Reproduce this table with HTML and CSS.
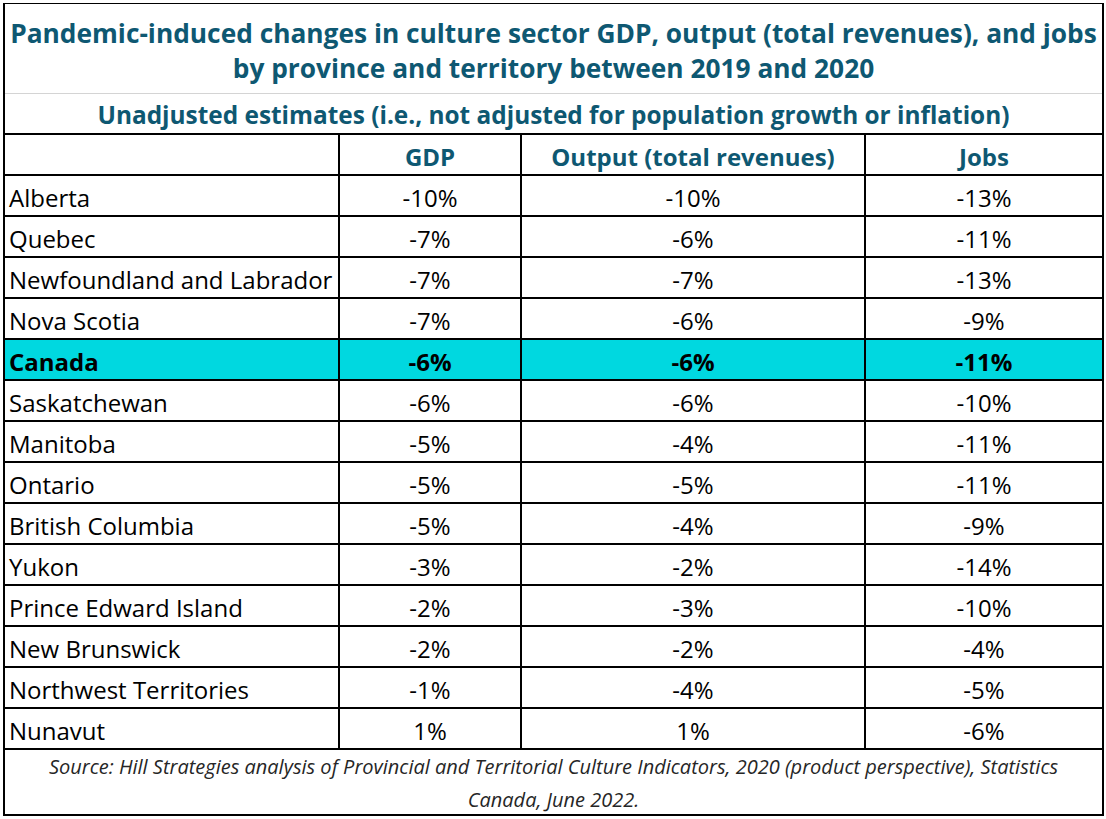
FILE: index.html
```html
<!DOCTYPE html>
<html>
<head>
<meta charset="utf-8">
<link rel="stylesheet" href="styles.css">
</head>
<body>
<div class="sheet">
  <div class="title">Pandemic-induced changes in culture sector GDP, output (total revenues), and jobs<br>by province and territory between 2019 and 2020</div>
  <div class="subtitle">Unadjusted estimates (i.e., not adjusted for population growth or inflation)</div>
  <div class="grid">
    <div class="c h"></div><div class="c h num">GDP</div><div class="c h num">Output (total revenues)</div><div class="c h num last">Jobs</div>
    <div class="c">Alberta</div><div class="c num">-10%</div><div class="c num">-10%</div><div class="c num last">-13%</div>
    <div class="c">Quebec</div><div class="c num">-7%</div><div class="c num">-6%</div><div class="c num last">-11%</div>
    <div class="c">Newfoundland and Labrador</div><div class="c num">-7%</div><div class="c num">-7%</div><div class="c num last">-13%</div>
    <div class="c">Nova Scotia</div><div class="c num">-7%</div><div class="c num">-6%</div><div class="c num last">-9%</div>
    <div class="c hl">Canada</div><div class="c num hl">-6%</div><div class="c num hl">-6%</div><div class="c num hl last">-11%</div>
    <div class="c">Saskatchewan</div><div class="c num">-6%</div><div class="c num">-6%</div><div class="c num last">-10%</div>
    <div class="c">Manitoba</div><div class="c num">-5%</div><div class="c num">-4%</div><div class="c num last">-11%</div>
    <div class="c">Ontario</div><div class="c num">-5%</div><div class="c num">-5%</div><div class="c num last">-11%</div>
    <div class="c">British Columbia</div><div class="c num">-5%</div><div class="c num">-4%</div><div class="c num last">-9%</div>
    <div class="c">Yukon</div><div class="c num">-3%</div><div class="c num">-2%</div><div class="c num last">-14%</div>
    <div class="c">Prince Edward Island</div><div class="c num">-2%</div><div class="c num">-3%</div><div class="c num last">-10%</div>
    <div class="c">New Brunswick</div><div class="c num">-2%</div><div class="c num">-2%</div><div class="c num last">-4%</div>
    <div class="c">Northwest Territories</div><div class="c num">-1%</div><div class="c num">-4%</div><div class="c num last">-5%</div>
    <div class="c">Nunavut</div><div class="c num">1%</div><div class="c num">1%</div><div class="c num last">-6%</div>
  </div>
  <div class="source">Source: Hill Strategies analysis of Provincial and Territorial Culture Indicators, 2020 (product perspective), Statistics<br>Canada, June 2022.</div>
</div>
</body>
</html>
```

FILE: styles.css
```css
html, body {
  margin: 0;
  padding: 0;
  background: #ffffff;
}
body {
  font-family: "Open Sans", "Noto Sans", sans-serif;
  color: #000;
}
.sheet {
  margin: 3px 0 0 3px;
  width: 1097px;
  border-top: 1px solid #000;
  border-left: 2px solid #000;
  border-right: 2px solid #000;
  border-bottom: 2px solid #000;
}
.title {
  height: 90px;
  box-sizing: border-box;
  padding-top: 12px;
  border-bottom: 1px solid #d4d4d4;
  text-align: center;
  font-weight: 700;
  font-size: 26.3px;
  line-height: 35px;
  color: #0e5872;
  white-space: nowrap;
}
.subtitle {
  height: 39px;
  box-sizing: border-box;
  padding-top: 3px;
  border-bottom: 2px solid #000;
  text-align: center;
  font-weight: 700;
  font-size: 24.4px;
  line-height: 35px;
  color: #0e5872;
  white-space: nowrap;
}
.subtitle {
  height: 41px;
}
.grid {
  display: grid;
  grid-template-columns: 335px 182px 344px 236px;
  grid-auto-rows: 41px;
}
.c {
  box-sizing: border-box;
  border-right: 2px solid #000;
  border-bottom: 2px solid #000;
  padding-left: 4px;
  padding-top: 4px;
  font-size: 24px;
  line-height: 36px;
  white-space: nowrap;
  overflow: hidden;
}
.c.last {
  border-right: none;
}
.num {
  text-align: center;
  padding-left: 0;
}
.h {
  font-weight: 700;
  color: #0e5872;
}
.hl {
  background: #00d8e0;
  font-weight: 700;
}
.source {
  height: 64px;
  text-align: center;
  font-style: italic;
  font-size: 20px;
  line-height: 33px;
  color: #262626;
  box-sizing: border-box;
  white-space: nowrap;
}
```
